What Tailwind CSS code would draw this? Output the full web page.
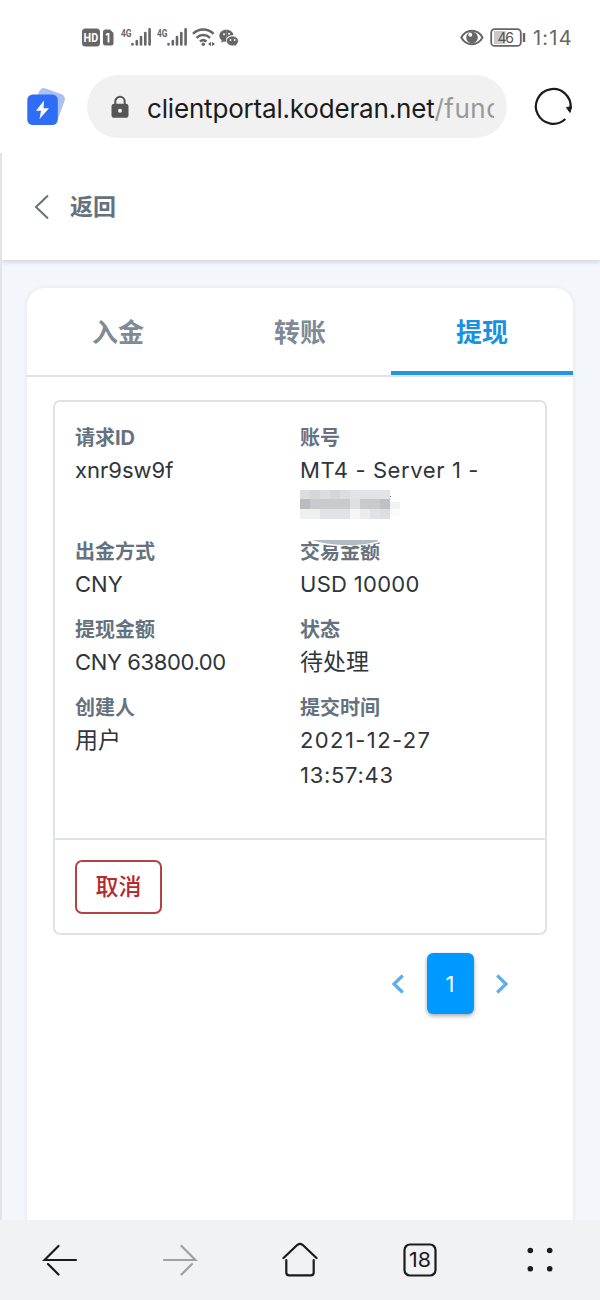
<!DOCTYPE html>
<html lang="zh-CN">
<head>
<meta charset="utf-8">
<meta name="viewport" content="width=device-width, initial-scale=1">
<title>提现</title>
<script src="https://cdn.jsdelivr.net/npm/@tailwindcss/browser@4"></script>
</head>
<body class="bg-white">
<div class="w-[600px] h-[1300px] flex flex-col overflow-hidden bg-white font-['Inter','Noto_Sans_CJK_SC',sans-serif] text-[#2f353a]">

  <!-- status bar -->
  <div class="h-[75px] shrink-0 flex items-center justify-between pl-[80px] pr-[28px]">
    <svg class="w-[160px] h-[24px]" viewBox="80 25.500 160 24" fill="#666">
      <rect x="82" y="28" width="18" height="18" rx="3.500"/>
      <text x="83.600" y="41.500" font-size="12" font-weight="700" fill="#fff" textLength="14.600" lengthAdjust="spacingAndGlyphs" font-family="Roboto">HD</text>
      <path d="M105.500 29h4.500l3.500 3.500v10a2.500 2.500 0 0 1-2.500 2.500h-5.500a2.500 2.500 0 0 1-2.500-2.500v-11a2.500 2.500 0 0 1 2.500-2.500z"/>
      <path d="M106 34.500l1.500-1.200h1v8.700" fill="none" stroke="#fff" stroke-width="1.800"/>
      <text x="121" y="36" font-size="11.500" font-weight="700" textLength="10.500" lengthAdjust="spacingAndGlyphs" font-family="Roboto">4G</text>
      <text x="157" y="36" font-size="11.500" font-weight="700" textLength="10.500" lengthAdjust="spacingAndGlyphs" font-family="Roboto">4G</text>
      <g stroke="#666" stroke-width="2.600" stroke-linecap="round">
        <path d="M132.500 43.500v.5M136.800 40.500v3.500M141 36.500v7.500M145.300 32.500v11.500M149.600 28.800v15.200"/>
        <path d="M168.500 43.500v.5M172.800 40.500v3.500M177 36.500v7.500M181.300 32.500v11.500M185.600 28.800v15.200"/>
      </g>
      <g fill="none" stroke="#666" stroke-width="2.500">
        <path d="M193 33.300a14.500 14.500 0 0 1 20.500 0M196.500 37.300a9.800 9.800 0 0 1 13.500 0M200 41a5 5 0 0 1 6.500 0"/>
      </g>
      <circle cx="203.300" cy="43.800" r="1.700"/>
      <path d="M208 43.500l3-2.300v4.600zM215 43.500l-3-2.300v4.600z"/>
      <path d="M226.300 29.300c-4.200 0-7 2.700-7 6 0 1.800.9 3.400 2.400 4.500l-.5 2.400 2.700-1.300c.9.200 1.700.3 2.400.3z"/>
      <path d="M226.300 29.300c4.400 0 7 2.500 7.200 5.500c-5-.5-8.500 3-7.200 6.400z"/>
      <path d="M232.500 35.600c3.300 0 5.900 2.200 5.900 4.900 0 1.500-.8 2.800-2 3.700l.4 1.900-2.200-1c-.7.200-1.400.3-2.100.3-3.400 0-6-2.200-6-4.900s2.600-4.900 6-4.900z" stroke="#fff" stroke-width=".7"/>
      <g fill="#fff"><circle cx="224" cy="33.800" r="1"/><circle cx="229" cy="33.300" r="1"/><circle cx="230.500" cy="39.500" r=".9"/><circle cx="234.700" cy="39.500" r=".9"/></g>
    </svg>
    <div class="flex items-center">
      <svg class="w-[66px] h-[24px]" viewBox="460 25.500 66 24">
        <path d="M461.300 37c5-9 16.200-9 21.200 0c-5 9-16.200 9-21.200 0z" fill="none" stroke="#666" stroke-width="2"/>
        <circle cx="472" cy="37" r="5.800" fill="#666"/><circle cx="470.300" cy="34.300" r="2" fill="#fff"/>
        <rect x="494" y="30.500" width="11.500" height="13" fill="#c9c9c9"/>
        <rect x="491.200" y="28.600" width="29.600" height="16.800" rx="3.500" fill="none" stroke="#666" stroke-width="1.800"/>
        <path d="M524 32.500v9" stroke="#666" stroke-width="2.400"/>
        <text x="497.500" y="42" font-size="14" fill="#555" textLength="16.500" font-family="Inter">46</text>
      </svg>
      <span class="ml-[7px] w-[39px] text-[20px] leading-6 tracking-[1.2px] text-[#666] whitespace-nowrap">1:14</span>
    </div>
  </div>

  <!-- address bar -->
  <div class="h-[78px] shrink-0 flex items-start pl-[26px]">
    <svg class="w-[42px] h-[40px] mt-[12px]" viewBox="26 87 42 40">
      <rect x="35.500" y="90.500" width="27" height="27" rx="5" fill="#a9c2f5" transform="rotate(20 49 104)"/>
      <rect x="27.300" y="94.500" width="30.500" height="30.500" rx="5.500" fill="#2f6df6"/>
      <path d="M44 100.500l-8 10.300h5l-1.500 8.200 9.500-10.800h-5.500z" fill="#fff"/>
    </svg>
    <div class="ml-[19px] w-[420px] h-[63px] rounded-full bg-[#f1f1f1] flex items-center pl-[24px]">
      <svg class="w-[18px] h-[24px]" viewBox="0 0 18 24"><path d="M4.300 10V6.500a4.700 4.700 0 0 1 9.400 0V10" fill="none" stroke="#555" stroke-width="2"/><rect x=".5" y="8.700" width="17" height="14" rx="2.800" fill="#555"/><circle cx="9" cy="15.700" r="2" fill="#f1f1f1"/></svg>
      <div class="ml-[18px] w-[347px] overflow-hidden whitespace-nowrap text-[26px] leading-[40px] text-[#1b1b1b] mt-[4px]"><span class="tracking-[-0.18px]">clientportal.koderan.net</span><span class="text-[#999] tracking-[0.5px]">/func</span></div>
    </div>
    <svg class="ml-[25px] mt-[11px] w-[42px] h-[42px]" viewBox="532 86 42 42" fill="none" stroke="#1b1b1b" stroke-width="2.200"><path d="M565.300 119a17.400 17.400 0 1 1 5.300-10.800" /><path d="M566.500 107.500l5.200-.8-1.700 5.800z" fill="#1b1b1b" stroke-width="1"/></svg>
  </div>

  <!-- page -->
  <div class="h-[1067px] shrink-0 border-l-2 border-[#e0e4e8] bg-[#f3f7fb] flex flex-col overflow-hidden">
    <div class="h-[107px] shrink-0 bg-white shadow-[0_2px_5px_rgba(40,50,70,0.18)] flex items-center pl-[32px]">
      <svg class="w-[16px] h-[26px]" viewBox="0 0 16 26" fill="none" stroke="#65717c" stroke-width="2"><path d="M14 1.500L2 13l12 11.500"/></svg>
      <span class="ml-[20px] mt-[2px] text-[23px] font-bold text-[#65717c]">返回</span>
    </div>
    <div class="mt-[28px] ml-[25px] w-[546px] h-[950px] shrink-0 rounded-t-[18px] bg-white shadow-[0_0_5px_rgba(40,50,70,0.09)] flex flex-col">
      <div class="h-[89px] shrink-0 grid grid-cols-3 border-b-2 border-[#e0e4e8] text-[26px] font-bold text-center leading-[89px] text-[#7e8a94]">
        <div>入金</div>
        <div>转账</div>
        <div class="h-[87px] border-b-4 border-[#2196db] text-[#1593e2]">提现</div>
      </div>
      <div class="mt-[23px] mx-[26px] w-[494px] h-[535px] shrink-0 border-2 border-[#e0e3e6] rounded-[7px] flex flex-col">
        <div class="h-[436px] grid grid-cols-[225px_1fr] auto-rows-max content-start pt-[21px] pl-[20px] text-[22px] leading-[35px]">
          <div class="h-[114px]"><div class="text-[20px] leading-[30px] font-bold text-[#65727e]">请求ID</div><div>xnr9sw9f</div></div>
          <div class="h-[114px]"><div class="text-[20px] leading-[30px] font-bold text-[#65727e]">账号</div><div class="whitespace-nowrap tracking-[0.6px]">MT4 - Server 1 -</div>
            <svg class="w-[104px] h-[30px] mt-[1px]" viewBox="0 0 104 30" shape-rendering="crispEdges">
              <path fill="#dcdddf" d="M0 1h50v9H0z"/><path fill="#e2e3e5" d="M50 1h40v9H50z"/><path fill="#d4d6d8" d="M10 1h10v9H10zM30 1h10v9H30z"/>
              <path fill="#b9bbbe" d="M0 10h10v10H0z"/><path fill="#c9cacd" d="M10 10h40v10H10zM60 10h20v10H60z"/><path fill="#dedfe1" d="M50 10h10v10H50z"/><path fill="#bfc0c3" d="M80 10h10v10H80z"/><path fill="#f1f2f2" d="M90 13h10v7H90z"/>
              <path fill="#eeefef" d="M0 20h20v10H0z"/><path fill="#e1e2e4" d="M20 20h30v10H20zM70 20h10v10H70z"/><path fill="#f5f6f6" d="M50 20h10v10H50z"/><path fill="#ececed" d="M60 20h10v10H60z"/><path fill="#dcdee0" d="M80 20h10v10H80z"/><path fill="#fafafa" d="M90 20h10v7H90z"/><path fill="#666" d="M90 7h1v1h-1z"/>
            </svg>
          </div>
          <div class="h-[78px]"><div class="text-[20px] leading-[30px] font-bold text-[#65727e]">出金方式</div><div>CNY</div></div>
          <div class="h-[78px]"><div class="relative text-[20px] leading-[30px] font-bold text-[#65727e]">交易金额<svg class="absolute left-0 top-0 w-[90px] h-[12px]" viewBox="0 0 90 12"><path d="M0 0h90v3H77l2 3Q62 9.500 44 9Q20 9 12 4H0z" fill="#fff"/><path d="M12 3h66v1.500q-12 3-22 3.500q-28 1-44-5z" fill="#b3bbc2"/></svg></div><div class="tracking-[0.3px]">USD 10000</div></div>
          <div class="h-[78px]"><div class="text-[20px] leading-[30px] font-bold text-[#65727e]">提现金额</div><div class="tracking-[-0.38px]">CNY 63800.00</div></div>
          <div class="h-[78px]"><div class="text-[20px] leading-[30px] font-bold text-[#65727e]">状态</div><div class="text-[23px]">待处理</div></div>
          <div class="h-[100px]"><div class="text-[20px] leading-[30px] font-bold text-[#65727e]">创建人</div><div class="text-[23px]">用户</div></div>
          <div class="h-[100px]"><div class="text-[20px] leading-[30px] font-bold text-[#65727e]">提交时间</div><div class="tracking-[1.4px]">2021-12-27</div><div class="tracking-[0.7px]">13:57:43</div></div>
        </div>
        <div class="flex-1 border-t-2 border-[#e0e3e6] pt-[20px] pl-[20px]">
          <div class="w-[87px] h-[54px] border-2 border-[#b04444] rounded-[7px] flex items-center justify-center pt-px text-[23px] font-medium text-[#b52a2c]">取消</div>
        </div>
      </div>
      <div class="mt-[18px] ml-[364px] flex items-center">
        <svg class="w-[14px] h-[20px]" viewBox="0 0 14 20" fill="none" stroke="#5bb0ea" stroke-width="3.200"><path d="M11.800 1.500L3 10l8.800 8.500"/></svg>
        <div class="ml-[22px] w-[47px] h-[61px] rounded-[6px] bg-[#0099ff] shadow-[0_2px_4px_rgba(0,0,0,0.35)] text-white text-[22px] flex items-center justify-center pr-px pt-px">1</div>
        <svg class="ml-[21px] w-[14px] h-[20px]" viewBox="0 0 14 20" fill="none" stroke="#5bb0ea" stroke-width="3.200"><path d="M2.200 1.500L11 10l-8.800 8.500"/></svg>
      </div>
    </div>
  </div>

  <!-- browser toolbar -->
  <div class="h-[80px] shrink-0 bg-[#f1f2f4] grid grid-cols-5 items-center justify-items-center">
    <svg class="w-[36px] h-[36px]" viewBox="0 0 36 36" fill="none" stroke="#1b1b1d" stroke-width="2.200" stroke-linecap="round"><path d="M34 18H2.500L16.500 4M6 22l10.500 10.500"/></svg>
    <svg class="w-[36px] h-[36px]" viewBox="0 0 36 36" fill="none" stroke="#a0a0a2" stroke-width="2.200" stroke-linecap="round"><path d="M2 18h31.500L19.500 4M30 22L19.500 32.500"/></svg>
    <svg class="w-[38px] h-[36px]" viewBox="0 0 38 36" fill="none" stroke="#1b1b1d" stroke-width="2.200" stroke-linecap="round" stroke-linejoin="round"><path d="M2.500 16L16.500 2.800q2.500-2 5 0L35.500 16M5.300 18v12.500q0 2.800 2.800 2.800h21.800q2.800 0 2.800-2.800V18"/></svg>
    <svg class="w-[36px] h-[36px]" viewBox="0 0 36 36"><rect x="2.500" y="2.500" width="31" height="31" rx="5.500" fill="none" stroke="#1b1b1d" stroke-width="2.200"/><text x="7" y="25" font-size="19.500" font-family="Inter" fill="#1b1b1d" textLength="22" lengthAdjust="spacingAndGlyphs">18</text></svg>
    <svg class="w-[36px] h-[36px]" viewBox="0 0 36 36" fill="#1b1b1d"><circle cx="8.300" cy="8.500" r="2.800"/><circle cx="27.700" cy="8.500" r="2.800"/><circle cx="8.300" cy="26.700" r="2.800"/><circle cx="27.700" cy="26.700" r="2.800"/></svg>
  </div>
</div>
</body>
</html>
